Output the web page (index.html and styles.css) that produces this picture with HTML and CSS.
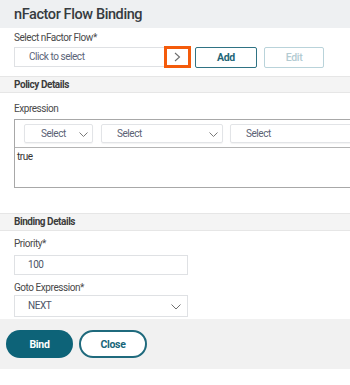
FILE: index.html
```html
<!DOCTYPE html>
<html>
<head>
<meta charset="utf-8">
<link rel="stylesheet" href="styles.css">
</head>
<body>
<div class="page">
  <div class="header"><h1 class="title">nFactor Flow Binding</h1></div>

  <div class="content">
    <div class="label first-label">Select nFactor Flow*</div>
    <div class="flow-row">
      <div class="input-group">
        <div class="input-text">Click to select</div>
        <div class="arrow-cell">
          <svg width="7" height="10" viewBox="0 0 7 10"><polyline points="1,1 5.5,5 1,9" fill="none" stroke="#6d6d6d" stroke-width="1.1"/></svg>
        </div>
      </div>
      <button class="btn-outline">Add</button>
      <button class="btn-outline disabled">Edit</button>
    </div>
  </div>

  <div class="bar bar-policy">Policy Details</div>

  <div class="content">
    <div class="label expr-label">Expression</div>
  </div>
  <div class="expr-box">
    <div class="expr-selects">
      <div class="mini-select w1"><span>Select</span>
        <svg class="chev" width="9" height="5" viewBox="0 0 9 5"><polyline points="0.5,0.5 4.5,4.5 8.5,0.5" fill="none" stroke="#7a7a7a" stroke-width="1"/></svg>
      </div>
      <div class="mini-select w2"><span>Select</span>
        <svg class="chev" width="9" height="5" viewBox="0 0 9 5"><polyline points="0.5,0.5 4.5,4.5 8.5,0.5" fill="none" stroke="#7a7a7a" stroke-width="1"/></svg>
      </div>
      <div class="mini-select w3"><span>Select</span></div>
    </div>
    <div class="expr-text">true</div>
  </div>

  <div class="bar bar-binding">Binding Details</div>

  <div class="content">
    <div class="label prio-label">Priority*</div>
    <div class="field">100</div>
    <div class="label goto-label">Goto Expression*</div>
    <div class="field select-field"><span>NEXT</span>
      <svg class="chev" width="10" height="6" viewBox="0 0 10 6"><polyline points="0.5,0.5 5,5 9.5,0.5" fill="none" stroke="#6f6f6f" stroke-width="1"/></svg>
    </div>
  </div>

  <div class="footer">
    <button class="btn-pill primary">Bind</button>
    <button class="btn-pill secondary">Close</button>
  </div>
</div>
</body>
</html>
```

FILE: styles.css
```css
* { box-sizing: border-box; }
html, body { margin: 0; padding: 0; }
body {
  width: 350px;
  height: 385px;
  overflow: hidden;
  background: #ffffff;
  font-family: "Roboto", "Inter", sans-serif;
  color: #3a3a3a;
  letter-spacing: -0.45px;
}
.page { width: 350px; overflow: hidden; }

.header {
  height: 28px;
  background: #eef0f2;
  padding-left: 14px;
  display: flex;
  align-items: center;
}
.title {
  margin: 0;
  font-size: 14.5px;
  font-weight: 500;
  color: #363b40;
  letter-spacing: -0.4px;
}

.content { padding: 0 14px; }

.label {
  font-size: 10px;
  color: #4a4a4a;
  line-height: 13px;
}
.first-label { margin-top: 3px; }

.flow-row {
  display: flex;
  align-items: center;
  margin-top: 2px;
  height: 22px;
}
.input-group {
  display: flex;
  align-items: center;
  width: 177px;
}
.input-text {
  width: 150px;
  height: 20px;
  border: 1px solid #dfe1e4;
  border-right: none;
  font-size: 10px;
  color: #5b6478;
  padding-left: 14px;
  line-height: 18px;
}
.arrow-cell {
  width: 27px;
  height: 22px;
  border: 3px solid #f45b0b;
  display: flex;
  align-items: center;
  justify-content: center;
}
.btn-outline {
  font-family: inherit;
  letter-spacing: -0.3px;
  height: 21px;
  width: 62px;
  margin-left: 4px;
  background: #fff;
  border: 1.5px solid #2f7384;
  border-radius: 2px;
  font-size: 10.5px;
  font-weight: 700;
  color: #1f6677;
  padding: 0;
}
.btn-outline.disabled {
  width: 60px;
  margin-left: 7px;
  border-color: #b9d3da;
  color: #b3cbd2;
  font-weight: 500;
}

.bar {
  height: 17px;
  background: #f4f4f4;
  border-top: 1px solid #e6e6e6;
  border-bottom: 1px solid #e6e6e6;
  padding-left: 14px;
  font-size: 10px;
  font-weight: 700;
  color: #3c3c3c;
  line-height: 15px;
}
.bar-policy { margin-top: 8px; }
.expr-label { margin-top: 9px; }

.expr-box {
  margin: 4px 0 0 14px;
  width: 336px;
  border: 1px solid #a8a8a8;
  border-right: none;
  overflow: hidden;
}
.expr-selects {
  display: flex;
  padding: 4px 0 4px 9px;
  border-bottom: 1px solid #b4b4b4;
}
.mini-select {
  flex-shrink: 0;
  height: 19px;
  border: 1px solid #e2e4e7;
  border-radius: 2px;
  box-shadow: 0 1px 1px rgba(0,0,0,0.05);
  display: flex;
  align-items: center;
  font-size: 10px;
  color: #5b6274;
  position: relative;
}
.mini-select .chev { position: absolute; right: 4px; top: 7px; }
.w1 { width: 69px; padding-left: 16px; }
.w2 { width: 122px; margin-left: 8px; padding-left: 15px; }
.w3 { width: 140px; margin-left: 7px; padding-left: 15px; }
.expr-text {
  height: 39px;
  padding: 3px 0 0 2px;
  font-size: 10px;
  color: #333;
}

.bar-binding { margin-top: 25px; height: 18px; line-height: 16px; }

.prio-label { margin-top: 6px; }
.field {
  width: 174px;
  height: 20px;
  margin-top: 5px;
  border: 1px solid #dfe1e4;
  font-size: 10px;
  color: #4e5568;
  padding-left: 13px;
  line-height: 18px;
  position: relative;
}
.goto-label { margin-top: 6px; }
.select-field { height: 22px; margin-top: 1px; line-height: 20px; }
.select-field .chev { position: absolute; right: 6px; top: 8px; }

.footer {
  margin-top: 2px;
  height: 50px;
  background: #f1f1f1;
  display: flex;
  align-items: center;
  padding-left: 6px;
}
.btn-pill {
  font-family: inherit;
  letter-spacing: -0.3px;
  height: 28px;
  border-radius: 14px;
  font-size: 10.5px;
  font-weight: 700;
  padding: 0;
}
.primary {
  width: 67px;
  background: #0d6378;
  color: #fff;
  border: none;
}
.secondary {
  width: 68px;
  margin-left: 6px;
  background: #fff;
  color: #17667a;
  border: 2px solid #1f6a7d;
}
```
